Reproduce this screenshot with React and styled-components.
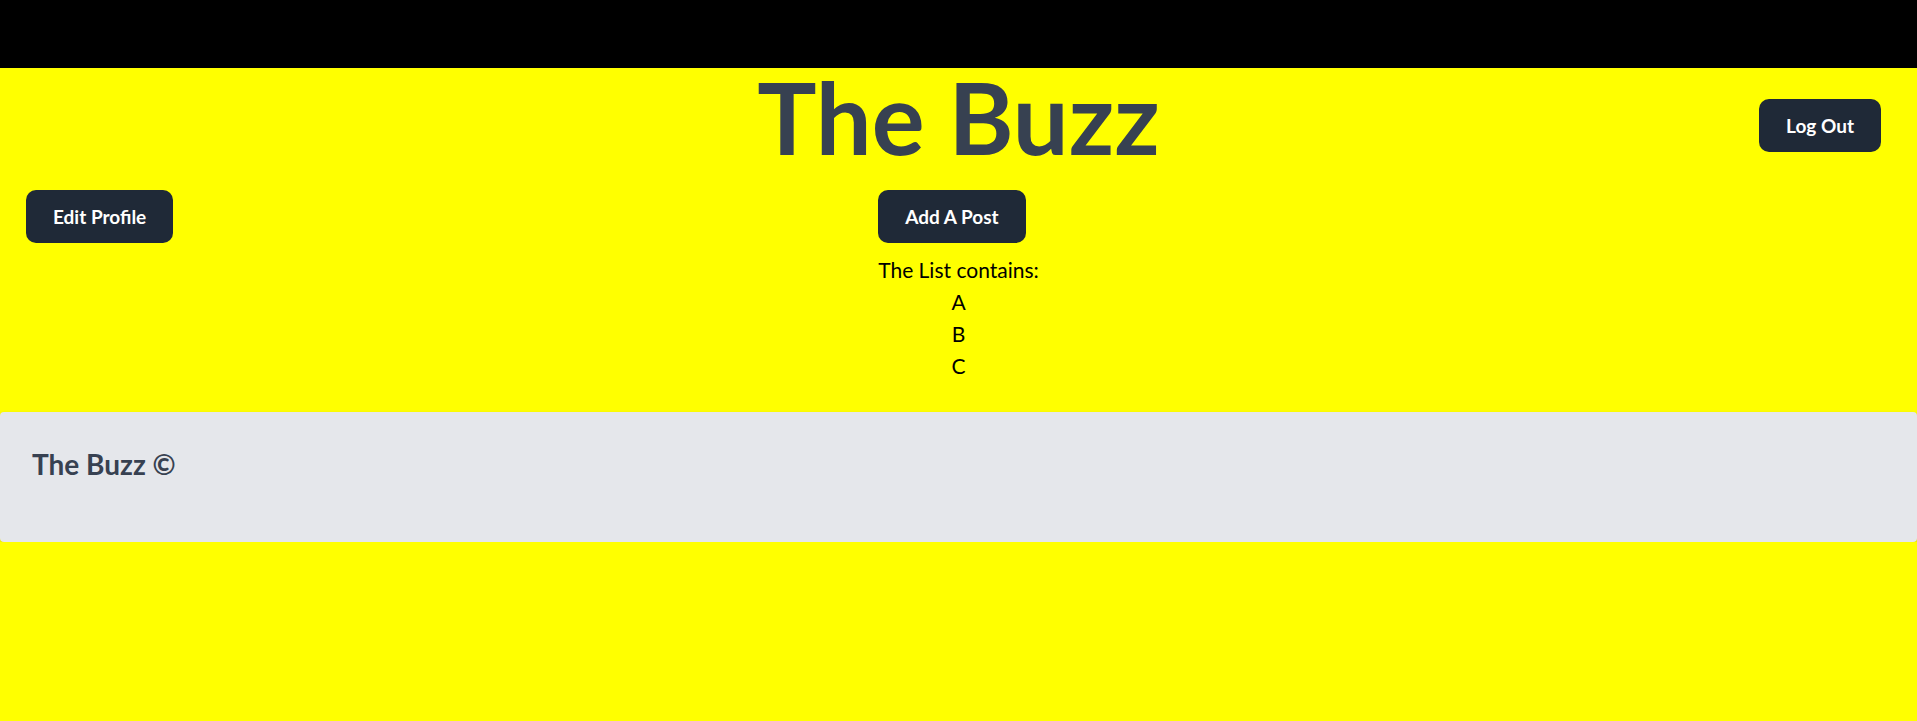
import styled, { createGlobalStyle } from 'styled-components'

const GlobalStyle = createGlobalStyle`
  html, body {
    margin: 0;
    padding: 0;
    background: #ffff00;
    font-family: Lato, "Noto Sans", "Liberation Sans", sans-serif;
  }
  * { box-sizing: border-box; }
`

// BARRA SUPERIOR
const TopBar = styled.div`
  height: 68px;
  background: #000;
`

const HeaderRow = styled.header`
  display: grid;
  grid-template-columns: 1fr auto 1fr;
  align-items: start;
`

const Title = styled.h1`
  grid-column: 2;
  margin: 0;
  font-size: 99px;
  line-height: 98px;
  font-weight: 700;
  color: #374151;
  white-space: nowrap;
`

const Button = styled.button`
  height: 53px;
  padding: 0 27px;
  border: none;
  border-radius: 10px;
  background: #1f2937;
  color: #fff;
  font-family: inherit;
  font-size: 19px;
  font-weight: 700;
  line-height: 25px;
  cursor: pointer;
`

const RightSlot = styled.div`
  grid-column: 3;
  display: flex;
  justify-content: flex-end;
  padding: 31px 36px 0 0;
`

// CONTENIDO
const Main = styled.main`
  display: grid;
  grid-template-columns: 1fr auto 1fr;
  margin-top: 24px;
`

const LeftSlot = styled.div`
  padding-left: 26px;
`

const Center = styled.div`
  display: flex;
  flex-flow: column;
  align-items: flex-start;
`

const List = styled.div`
  margin-top: 11px;
  text-align: center;
  font-size: 21px;
  line-height: 32px;
  color: #000;

  ul {
    list-style: none;
    margin: 0;
    padding: 0;
  }
`

const Footer = styled.footer`
  margin-top: 30px;
  height: 130px;
  padding: 35px 32px 0;
  background: #e5e7eb;
  border-radius: 4px;
  box-shadow: 0 1px 3px rgba(0, 0, 0, 0.12), 0 1px 2px rgba(0, 0, 0, 0.06);

  h2 {
    margin: 0;
    font-size: 28px;
    line-height: 34px;
    font-weight: 700;
    color: #374151;
  }
`

const items = ['A', 'B', 'C']

const App = () => {
  return (
    <>
      <GlobalStyle />
      <TopBar />
      <HeaderRow>
        <Title>The Buzz</Title>
        <RightSlot>
          <Button>Log Out</Button>
        </RightSlot>
      </HeaderRow>
      <Main>
        <LeftSlot>
          <Button>Edit Profile</Button>
        </LeftSlot>
        <Center>
          <Button>Add A Post</Button>
          <List>
            The List contains:
            <ul>
              {items.map(i => <li key={i}>{i}</li>)}
            </ul>
          </List>
        </Center>
        <div />
      </Main>
      <Footer>
        <h2>The Buzz ©</h2>
      </Footer>
    </>
  )
}

export default App
